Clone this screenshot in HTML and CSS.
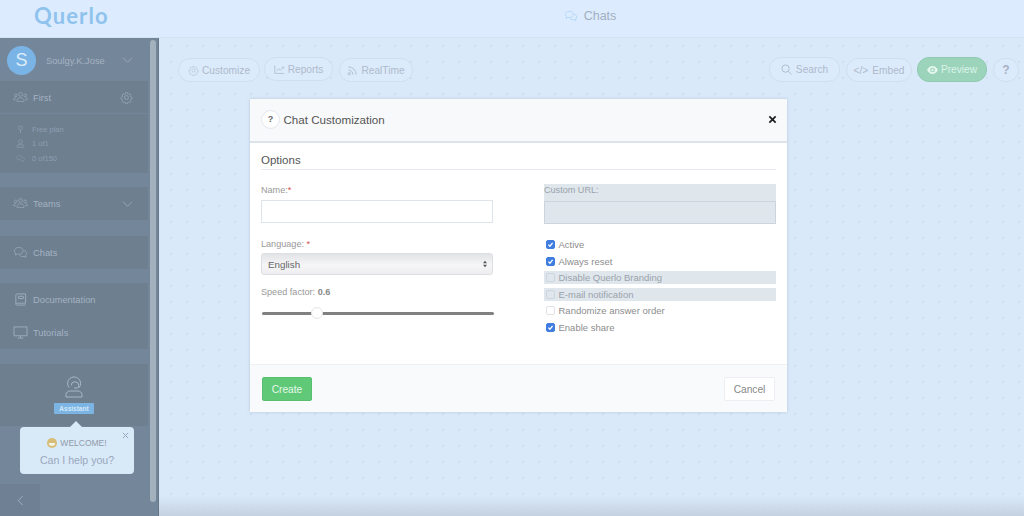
FILE: index.html
```html
<!DOCTYPE html>
<html lang="en">
<head>
<meta charset="utf-8">
<title>Querlo - Chats</title>
<link rel="stylesheet" href="styles.css">
</head>
<body>
<svg class="defs" width="0" height="0">
  <symbol id="i-chats" viewBox="0 0 20 18"><path d="M7.5 2C4 2 1.5 4 1.5 6.6c0 1.4.7 2.5 1.8 3.4L2.6 12.500l3-1.300c.6.100 1.200.200 1.900.200 3.500 0 6-2 6-4.800S11 2 7.500 2z"/><path d="M14.500 6.200c2.300.5 4 2.200 4 4.200 0 1.200-.6 2.300-1.600 3l.6 2.300-2.700-1.200c-.5.100-1 .2-1.600.2-2 0-3.700-.8-4.600-2.100"/></symbol>
  <symbol id="i-group" viewBox="0 0 24 18"><circle cx="12" cy="4" r="3"/><path d="M6.500 15.500v-2.500c0-2 2-3.500 5.500-3.500s5.500 1.500 5.500 3.500v2.500z"/><circle cx="4.500" cy="5.500" r="2.200"/><circle cx="19.500" cy="5.500" r="2.200"/><path d="M5 12.500H1v-1.500c0-1.300 1.200-2.300 3.500-2.300M19 12.500h4v-1.500c0-1.300-1.200-2.300-3.500-2.300"/></symbol>
  <symbol id="i-gear" viewBox="0 0 20 20"><circle cx="10" cy="10" r="3"/><path d="M8.500 1.500h3l.5 2.500 1.500.7 2.200-1.300 2 2.200-1.300 2.100.6 1.500 2.500.6v2.900l-2.500.6-.6 1.500 1.300 2.100-2 2.200-2.200-1.300-1.500.7-.5 2.500h-3l-.5-2.500-1.500-.7-2.200 1.300-2-2.200 1.300-2.100-.6-1.500-2.500-.6v-2.900l2.500-.6.6-1.500-1.300-2.100 2-2.200 2.200 1.300 1.500-.7z" transform="translate(1 1) scale(.9)"/></symbol>
  <symbol id="i-down" viewBox="0 0 14 8"><path d="M1 1l6 6 6-6"/></symbol>
</svg>

<header class="topbar">
  <div class="logo">Querlo</div>
  <div class="page-title">
    <svg class="title-icon"><use href="#i-chats"/></svg>
    <span>Chats</span>
  </div>
</header>

<div class="layout">
  <aside class="sidebar">
    <div class="user">
      <div class="avatar">S</div>
      <span class="user-name">Soulgy.K.Jose</span>
      <svg class="chev"><use href="#i-down"/></svg>
    </div>
    <div class="block">
      <div class="row row-first">
        <svg class="ico"><use href="#i-group"/></svg>
        <span class="grow">First</span>
        <svg class="gear"><use href="#i-gear"/></svg>
      </div>
      <ul class="stats">
        <li><svg class="stat-ico" viewBox="0 0 12 12"><circle cx="6" cy="4" r="2.600"/><path d="M6 6.600V11"/></svg>Free plan</li>
        <li><svg class="stat-ico" viewBox="0 0 12 12"><circle cx="6" cy="3.500" r="2.500"/><path d="M1.500 11V9.500C1.500 8 3 7.500 6 7.500s4.500.5 4.500 2V11z"/></svg>1 of1</li>
        <li><svg class="stat-ico"><use href="#i-chats"/></svg>0 of150</li>
      </ul>
    </div>
    <div class="block block-teams">
      <div class="row">
        <svg class="ico"><use href="#i-group"/></svg>
        <span class="grow">Teams</span>
        <svg class="chev"><use href="#i-down"/></svg>
      </div>
    </div>
    <div class="block block-chats">
      <div class="row">
        <svg class="ico ico-chat"><use href="#i-chats"/></svg>
        <span class="grow">Chats</span>
      </div>
    </div>
    <div class="block block-docs">
      <div class="row">
        <svg class="ico ico-book" viewBox="0 0 12 14"><path d="M2.500 1h9v10h-9c-.8 0-1.500.6-1.500 1.200S1.700 13 2.500 13h9M1 12V2.200C1 1.500 1.700 1 2.500 1M4 3.500h5v2.500H4z"/></svg>
        <span class="grow">Documentation</span>
      </div>
      <div class="row">
        <svg class="ico" viewBox="0 0 16 14"><path d="M1 1h14v9.500H1zM5 13h6M8 10.500V13"/></svg>
        <span class="grow">Tutorials</span>
      </div>
    </div>
    <div class="block block-assist">
      <svg class="assist-ico" viewBox="0 0 20 22"><path d="M5 11.500a6.500 6.500 0 1 1 10 .2"/><path d="M7.200 9.500a3.800 3.800 0 0 1 7.600 0c0 1.200-.6 2-1.300 2.500"/><path d="M10 12h3.500"/><path d="M2 21v-2.500c0-2 2-3.500 4-3.500h8c2 0 4 1.500 4 3.500V21z"/></svg>
      <div class="assist-tag">Assistant</div>
    </div>
    <div class="bubble">
      <svg class="bubble-x" viewBox="0 0 8 8"><path d="M1 1l6 6M7 1L1 7"/></svg>
      <div class="bubble-head"><svg class="emoji" viewBox="0 0 10 10"><circle class="emoji-face" cx="5" cy="5" r="5"/><path class="emoji-mouth" d="M1.800 5h6.400c0 1.800-1.400 3-3.200 3S1.800 6.800 1.800 5z"/></svg>WELCOME!</div>
      <div class="bubble-text">Can I help you?</div>
    </div>
    <div class="collapse"><svg viewBox="0 0 7 12"><path d="M6 1L1 6l5 5"/></svg></div>
    <div class="scrollbar"></div>
  </aside>

  <main class="main">
    <div class="toolbar">
      <a class="pill pill-customize"><svg class="pill-ico"><use href="#i-gear"/></svg>Customize</a>
      <a class="pill pill-up pill-reports"><svg class="pill-ico" viewBox="0 0 14 12"><path d="M1 1v10h12M3 8l3-3 2 2 4-4M10 3h2.500v2"/></svg>Reports</a>
      <a class="pill pill-realtime"><svg class="pill-ico" viewBox="0 0 12 12"><circle cx="2.500" cy="9.500" r="1.300"/><path d="M1.500 5.500a5 5 0 0 1 5 5M1.500 2a8.500 8.500 0 0 1 8.500 8.500"/></svg>RealTime</a>
      <span class="spacer"></span>
      <a class="pill pill-up pill-search"><svg class="pill-ico" viewBox="0 0 12 12"><circle cx="5" cy="5" r="4"/><path d="M8 8l3.500 3.500"/></svg>Search</a>
      <a class="pill pill-embed"><span class="code">&lt;/&gt;</span>Embed</a>
      <a class="pill pill-up pill-preview"><svg class="pill-ico eye" viewBox="0 0 14 10"><path class="eye-fill" d="M0 5c2-3.200 4.300-5 7-5s5 1.800 7 5c-2 3.200-4.300 5-7 5S2 8.200 0 5zm7 3a3 3 0 1 0 0-6 3 3 0 0 0 0 6zm0-1.500a1.500 1.500 0 1 1 0-3 1.500 1.500 0 0 1 0 3z"/></svg>Preview</a>
      <a class="pill pill-help">?</a>
    </div>

    <section class="modal">
      <div class="modal-head">
        <span class="help-circle">?</span>
        <h2 class="modal-title">Chat Customization</h2>
        <svg class="close" viewBox="0 0 10 10"><path d="M1.500 1.500l7 7M8.500 1.500l-7 7"/></svg>
      </div>
      <div class="modal-body">
        <h3 class="options">Options</h3>
        <div class="form-grid">
          <div class="col">
            <label class="lbl lbl-name">Name:<span class="req">*</span></label>
            <div class="input"></div>
            <label class="lbl lbl-lang">Language: <span class="req">*</span></label>
            <div class="select"><span>English</span><svg class="updown" viewBox="0 0 6 10"><path d="M3 0l3 4H0zM3 10L0 6h6z"/></svg></div>
            <label class="lbl lbl-speed">Speed factor: <b>0.6</b></label>
            <div class="slider"><div class="thumb"></div></div>
          </div>
          <div class="col">
            <div class="custom-url">
              <label class="lbl lbl-url">Custom URL:</label>
              <div class="input input-off"></div>
            </div>
            <div class="checks">
              <div class="check"><span class="box on"><svg viewBox="0 0 10 10"><path d="M2 5.200l2.200 2.300L8 2.800"/></svg></span>Active</div>
              <div class="check"><span class="box on"><svg viewBox="0 0 10 10"><path d="M2 5.200l2.200 2.300L8 2.800"/></svg></span>Always reset</div>
              <div class="check off"><span class="box"></span>Disable Querlo Branding</div>
              <div class="check off"><span class="box"></span>E-mail notification</div>
              <div class="check"><span class="box"></span>Randomize answer order</div>
              <div class="check"><span class="box on"><svg viewBox="0 0 10 10"><path d="M2 5.200l2.200 2.300L8 2.800"/></svg></span>Enable share</div>
            </div>
          </div>
        </div>
      </div>
      <div class="modal-foot">
        <button class="btn btn-create" type="button">Create</button>
        <button class="btn btn-cancel" type="button">Cancel</button>
      </div>
    </section>
  </main>
</div>
</body>
</html>
```

FILE: styles.css
```css
* { box-sizing: border-box; }
html, body { margin: 0; padding: 0; height: 516px; overflow: hidden; }
body {
  width: 1024px;
  font-family: "Liberation Sans", Arial, sans-serif;
  background: #d9e9f9;
  color: #555;
  display: flex;
  flex-direction: column;
}
.defs { position: absolute; }
svg { fill: none; stroke: currentColor; stroke-width: 1; display: block; flex: none; }

/* top bar */
.topbar {
  height: 38px;
  flex: none;
  background: #dcecfe;
  position: relative;
  display: flex;
  align-items: center;
  justify-content: center;
  padding-left: 156px;
  border-bottom: 1px solid #d3e2f3;
}
.logo {
  position: absolute;
  left: 34px;
  top: 1px;
  font: 700 22px/30px "Lato", "Open Sans", sans-serif;
  color: #8fc3ee;
  letter-spacing: 1.100px;
}
.page-title {
  display: flex;
  align-items: center;
  gap: 6px;
  font-size: 12.500px;
  color: #a2afc0;
  margin-top: -5px;
}
.title-icon { width: 14px; height: 12px; color: #a3cff3; }

.layout { flex: 1; min-height: 0; display: flex; }

/* sidebar */
.sidebar {
  width: 159px;
  flex: none;
  position: relative;
  background: #74869a;
  color: #a4b2c2;
  font-size: 9.300px;
  padding-right: 10px;
  border-right: 1px solid #66778a;
}
.user {
  height: 43px;
  display: flex;
  align-items: center;
  padding-left: 7px;
  padding-top: 1px;
}
.avatar {
  width: 29px;
  height: 29px;
  border-radius: 50%;
  background: #7ab4e6;
  color: #dcecfa;
  font-size: 18px;
  line-height: 29px;
  text-align: center;
  flex: none;
}
.user-name { margin-left: 10px; margin-top: 1px; flex: 1; }
.chev { width: 11px; height: 6px; color: #a4b2c2; margin-right: 15px; }
.block { background: #6e7f90; }
.row {
  height: 33px;
  display: flex;
  align-items: center;
  padding-left: 13px;
}
.row-first { border-bottom: 1px solid #74849a; }
.grow { flex: 1; padding-top: 1px; }
.ico { width: 15px; height: 13px; margin-right: 5px; color: #a0aebe; }
.gear { width: 13px; height: 13px; margin-right: 15px; color: #a4b2c2; }
.stats {
  list-style: none;
  margin: 0;
  padding: 8px 0 0 16px;
  height: 59px;
  font-size: 7.500px;
  color: #8f9eb0;
}
.stats li { height: 14.500px; display: flex; align-items: center; }
.stat-ico { width: 9px; height: 9px; margin-right: 7px; color: #8f9eb0; }
.block-teams { margin-top: 14px; }
.block-chats { margin-top: 16px; }
.block-docs { margin-top: 14px; }
.block-assist {
  margin-top: 15px;
  height: 62px;
  display: flex;
  flex-direction: column;
  align-items: center;
  padding-top: 12px;
}
.assist-ico { width: 20px; height: 22px; color: #a9b8c8; }
.assist-tag {
  margin-top: 5px;
  width: 40px;
  height: 11px;
  background: #7cb5e4;
  color: #d3e8f8;
  font-size: 6.500px;
  font-weight: 700;
  line-height: 11px;
  text-align: center;
  border-radius: 1px;
}
.bubble {
  position: absolute;
  left: 20px;
  top: 389px;
  width: 114px;
  height: 47px;
  background: #d8e9f8;
  border-radius: 4px;
  text-align: center;
  color: #9aa8bd;
}
.bubble::before {
  content: "";
  position: absolute;
  left: 50px;
  top: -6px;
  border: 6px solid transparent;
  border-top: 0;
  border-bottom-color: #d8e9f8;
}
.bubble-x {
  position: absolute;
  right: 5px;
  top: 5px;
  width: 7px;
  height: 7px;
  color: #8d9cb4;
}
.bubble-head {
  display: flex;
  align-items: center;
  justify-content: center;
  gap: 3px;
  padding-top: 8px;
  font-size: 8.500px;
  color: #8f9bab;
  height: 23px;
}
.emoji { width: 10px; height: 10px; }
.emoji-face { fill: #d8bd78; stroke: none; }
.emoji-mouth { fill: #f3f3e8; stroke: none; }
.bubble-text { font-size: 10.600px; line-height: 14px; margin-top: 3px; }
.collapse {
  position: absolute;
  left: 0;
  bottom: 0;
  width: 40px;
  height: 32px;
  background: #6f8094;
  color: #a4b2c2;
  display: flex;
  align-items: center;
  justify-content: center;
}
.collapse svg { width: 7px; height: 11px; }
.scrollbar {
  position: absolute;
  left: 150px;
  top: 2px;
  width: 6px;
  height: 462px;
  background: #a3b0bd;
  border-radius: 3px;
}

/* main */
.main {
  flex: 1;
  position: relative;
  background-color: #d9e9f9;
  background-image: radial-gradient(circle, #ccdbeb 0.6px, transparent 1px);
  background-size: 16px 16px;
  background-position: 4px 0;
}
.main::after {
  content: "";
  position: absolute;
  left: 0;
  right: 0;
  bottom: 0;
  height: 20px;
  background: linear-gradient(rgba(190, 203, 219, 0), #c4d1e0);
}
.toolbar {
  padding: 20px 5px 0 19px;
  display: flex;
  align-items: flex-start;
}
.spacer { flex: 1; }
.pill {
  height: 24px;
  margin-right: 4px;
  border: 1.500px solid #cfdff0;
  border-radius: 12px;
  background: #dcebfb;
  display: flex;
  align-items: center;
  justify-content: center;
  font-size: 10.200px;
  color: #aebacb;
  gap: 3px;
}
.pill-up { margin-top: -1px; }
.pill-ico { width: 11px; height: 11px; color: #aebacb; }
.pill-customize { width: 82px; }
.pill-reports { width: 69px; margin-right: 6px; }
.pill-realtime { width: 74px; }
.pill-search { width: 71px; height: 25px; margin-right: 6px; gap: 4px; }
.pill-embed { width: 66px; margin-right: 5px; gap: 4px; }
.pill-preview {
  width: 70px;
  height: 25px;
  margin-right: 6px;
  background: #9bd4bb;
  border-color: #8ecbb0;
  color: #dcf3ea;
}
.pill-help {
  width: 26px;
  margin-right: 0;
  font-size: 12px;
  font-weight: 700;
  color: #a6b1c3;
}
.code { font-size: 10.200px; }
.eye { width: 11px; height: 8px; }
.eye-fill { fill: #e6f6ef; stroke: none; fill-rule: evenodd; }

/* modal */
.modal {
  position: absolute;
  left: 91px;
  top: 61px;
  width: 537px;
  height: 313px;
  background: #fff;
  box-shadow: 0 0 3px rgba(120, 140, 165, .35);
  display: flex;
  flex-direction: column;
  z-index: 1;
}
.modal-head {
  height: 44px;
  flex: none;
  background: #f8f9fb;
  border-bottom: 2px solid #dde3ea;
  display: flex;
  align-items: center;
  padding: 0 10px 2px 11px;
}
.help-circle {
  width: 19px;
  height: 19px;
  border-radius: 50%;
  border: 1px solid #e4e7ec;
  background: #fff;
  font-size: 9px;
  font-weight: 700;
  line-height: 17px;
  text-align: center;
  color: #666;
}
.modal-title {
  flex: 1;
  margin: 0 0 0 3.500px;
  font-size: 11.600px;
  font-weight: 400;
  color: #555;
}
.close { width: 9px; height: 9px; color: #222; stroke-width: 2; }
.modal-body { flex: 1; padding: 0 11px; }
.options {
  margin: 0;
  height: 27px;
  padding-top: 10px;
  font-size: 11.500px;
  line-height: 14px;
  font-weight: 400;
  color: #555;
  border-bottom: 1px solid #e7eaee;
}
.form-grid {
  display: grid;
  grid-template-columns: 232px 232px;
  column-gap: 51px;
}
.lbl { display: block; font-size: 9.100px; line-height: 11px; color: #999; }
.lbl b { color: #888; }
.req { color: #d9534f; }
.lbl-name { margin-top: 15px; }
.input {
  height: 23px;
  margin-top: 4px;
  border: 1px solid #dfe3ea;
  background: #fff;
}
.lbl-lang { margin-top: 16px; }
.select {
  height: 22px;
  margin-top: 3px;
  padding: 0 5px 0 6px;
  border: 1px solid #dcdfe4;
  border-radius: 3px;
  background: linear-gradient(#e2e3e6, #f6f6f7 55%, #eeeef0);
  display: flex;
  align-items: center;
  justify-content: space-between;
  font-size: 9.800px;
  color: #666;
}
.updown { width: 4px; height: 8px; fill: #555; stroke: none; }
.lbl-speed { margin-top: 12px; }
.slider {
  position: relative;
  height: 3px;
  width: 232px;
  margin: 14px 0 0 1px;
  background: #808080;
  border-radius: 2px;
}
.thumb {
  position: absolute;
  left: 49px;
  top: -5px;
  width: 12px;
  height: 12px;
  border-radius: 50%;
  background: #fff;
  border: 1px solid #e3e6ea;
}
.custom-url { margin-top: 14px; background: #dfe6ec; height: 40px; }
.lbl-url { padding-top: 1px; height: 17px; color: #9aa3ab; }
.input-off { margin-top: 0; background: #dfe6ec; border: 1px solid #cdd5dc; }
.checks { margin-top: 14px; display: flex; flex-direction: column; gap: 3.500px; }
.check {
  height: 13px;
  display: flex;
  align-items: center;
  gap: 4px;
  padding-left: 2px;
  font-size: 9.500px;
  color: #8d8d8d;
}
.check.off { background: #dfe6ec; color: #9aa3ab; }
.box {
  width: 8.500px;
  height: 9px;
  border-radius: 2px;
  border: 1px solid #dfe2e6;
  background: #fff;
  flex: none;
}
.off .box { background: #dfe6ec; border-color: #ced6dd; }
.box.on { background: #3f7de0; border-color: #3f7de0; color: #fff; }
.box.on svg { width: 7px; height: 7px; stroke-width: 1.800; }
.modal-foot {
  height: 48px;
  flex: none;
  background: #f9fafc;
  border-top: 1px solid #eff1f4;
  display: flex;
  align-items: center;
  justify-content: space-between;
  padding: 1px 12px 0;
}
.btn {
  height: 24px;
  border-radius: 2px;
  font: 10.200px "Liberation Sans", Arial, sans-serif;
}
.btn-create { width: 50px; background: #5fc978; border: 1px solid #57bf70; color: #e6f7ea; }
.btn-cancel { width: 51px; background: #fff; border: 1px solid #eceef1; color: #888; }
```
